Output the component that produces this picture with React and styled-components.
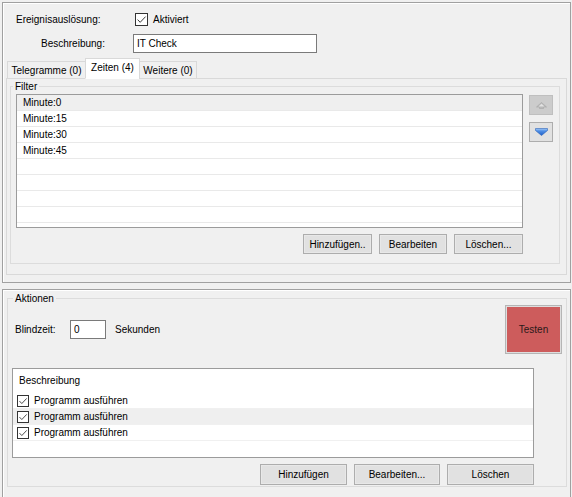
import React from "react"
import styled, { createGlobalStyle } from "styled-components"

const GlobalStyle = createGlobalStyle`
  html, body {
    margin: 0;
    padding: 0;
    background: #f0f0f0;
  }
  body {
    font-family: "Liberation Sans", Arial, sans-serif;
    font-size: 10px;
    color: #000;
  }
  * {
    box-sizing: border-box;
  }
`

const Window = styled.div`
  width: 572px;
  height: 497px;
  overflow: hidden;
  padding: 2px 1px 0 2px;
  display: flex;
  flex-direction: column;
  gap: 6px;
`

const Panel = styled.section`
  flex-shrink: 0;
  height: ${props => props.height}px;
  border: 1px solid #a0a0a0;
  box-shadow: inset 1px 1px 0 #fff;
`

const FormGrid = styled.div`
  display: grid;
  grid-template-columns: 130px 1fr;
  grid-template-rows: 17px 19px;
  row-gap: 6px;
  align-items: center;
  padding-top: 8px;
`

const FieldLabel = styled.span`
  padding-left: ${props => props.indent}px;
`

const CheckField = styled.label`
  display: flex;
  align-items: center;
  gap: 5px;
  margin-left: 2px;
`

const CheckBox = styled.span`
  width: ${props => props.size}px;
  height: ${props => props.size}px;
  flex-shrink: 0;
  border: 1px solid #333;
  background: #fff;
  display: inline-flex;
  align-items: center;
  justify-content: center;
  svg {
    display: block;
  }
`

const Check = ({ size }) => (
  <CheckBox size={size}>
    <svg width={size - 2} height={size - 2} viewBox="0 0 11 11">
      <path d="M1.6 5.6 L4.2 8.3 L9.6 2.6" fill="none" stroke="#3a3a3a" strokeWidth="1" />
    </svg>
  </CheckBox>
)

const TextBox = styled.input`
  width: ${props => props.width}px;
  height: 19px;
  border: 1px solid #7a7a7a;
  background: #fff;
  padding: 0 3px;
  font: inherit;
  color: #000;
  outline: none;
`

const TabStrip = styled.div`
  position: relative;
  z-index: 1;
  display: flex;
  align-items: flex-end;
  margin: 5px 0 -1px 5px;
`

const Tab = styled.div`
  width: ${props => props.width}px;
  height: ${props => (props.active ? 21 : 18)}px;
  margin-left: -1px;
  padding-top: 3px;
  text-align: center;
  line-height: 12px;
  white-space: nowrap;
  background: ${props => (props.active ? "#fff" : "#f0f0f0")};
  border: 1px solid #d9d9d9;
  border-bottom-color: ${props => (props.active ? "#fff" : "#d9d9d9")};
`

const TabPage = styled.div`
  height: 197px;
  margin: 0 3px;
  border: 1px solid #d9d9d9;
  background: #f0f0f0;
  padding-top: 1px;
`

const GroupBox = styled.fieldset`
  width: ${props => props.width}px;
  height: ${props => props.height}px;
  margin: ${props => props.margin};
  padding: 0;
  min-width: 0;
  border: 1px solid #dcdcdc;
`

const Legend = styled.legend`
  margin-left: ${props => props.offset}px;
  padding: 0 2px;
  line-height: 13px;
  height: 13px;
`

const FilterBody = styled.div`
  display: grid;
  grid-template-columns: 507px 24px;
  grid-template-rows: 134px 20px;
  column-gap: 6px;
  row-gap: 6px;
  padding: 1px 0 0 5px;
`

const ListBox = styled.div`
  height: 134px;
  border: 1px solid #9b9b9b;
  background: #fff;
  overflow: hidden;
`

const ListRow = styled.div`
  height: 16px;
  line-height: 15px;
  padding-left: 6px;
  border-bottom: 1px solid #e9e9e9;
  background: ${props => (props.highlight ? "#efefef" : "#fff")};
`

const ArrowColumn = styled.div`
  display: flex;
  flex-direction: column;
  gap: 7px;
  padding-top: 1px;
`

const ArrowButton = styled.div`
  width: 24px;
  height: 20px;
  display: flex;
  align-items: center;
  justify-content: center;
  background: ${props => (props.disabled ? "#cccccc" : "#e1e1e1")};
  border: 1px solid ${props => (props.disabled ? "#bfbfbf" : "#adadad")};
`

const ButtonRow = styled.div`
  grid-column: 1;
  display: flex;
  justify-content: flex-end;
  gap: 7px;
  width: ${props => props.width}px;
  margin: ${props => props.margin || 0};
`

const Button = styled.button`
  width: ${props => props.width}px;
  height: ${props => props.height || 20}px;
  padding: 0;
  font: inherit;
  color: #000;
  background: #e1e1e1;
  border: 1px solid #adadad;
  box-shadow: inset 0 0 0 1px #e8e8e8;
`

const ActionTop = styled.div`
  height: 49px;
  display: flex;
  align-items: center;
  justify-content: space-between;
  padding: 0 4px 0 7px;
`

const Inline = styled.div`
  display: flex;
  align-items: center;
`

const InlineLabel = styled.span`
  width: ${props => props.width || "auto"};
  margin-left: ${props => props.gap || 0}px;
`

const TestButton = styled.div`
  width: 57px;
  height: 49px;
  display: flex;
  align-items: center;
  justify-content: center;
  color: #2a1a1a;
  background: #cd5c5c;
  border: 1px solid #b5b5b5;
  box-shadow: inset 0 0 0 1px #dedede;
`

const ActionList = styled.div`
  width: 522px;
  height: 90px;
  margin: 14px 0 0 4px;
  border: 1px solid #9b9b9b;
  background: #fff;
  overflow: hidden;
`

const ListHeader = styled.div`
  height: 24px;
  line-height: 24px;
  padding-left: 6px;
`

const CheckRow = styled.div`
  height: 16px;
  display: flex;
  align-items: center;
  gap: 5px;
  padding-left: 4px;
  border-bottom: 1px solid #f0f0f0;
  background: ${props => (props.highlight ? "#efefef" : "#fff")};
`

const UpArrow = () => (
  <svg width="11" height="7" viewBox="0 0 11 7">
    <polygon points="5.5,0.5 10.5,5 7.5,5 7.5,6.5 3.5,6.5 3.5,5 0.5,5" fill="#b9b9b9" stroke="#ababab" strokeWidth="0.7" />
    <polygon points="5.5,1.8 8.5,4.4 2.5,4.4" fill="#e2e2e2" />
  </svg>
)

const DownArrow = () => (
  <svg width="13" height="8" viewBox="0 0 13 8">
    <defs>
      <linearGradient id="blue" x1="0" y1="0" x2="0" y2="1">
        <stop offset="0" stopColor="#a9cdf7" />
        <stop offset="0.35" stopColor="#4f8fe6" />
        <stop offset="1" stopColor="#1e5fc8" />
      </linearGradient>
    </defs>
    <polygon points="0.5,0.5 12.5,0.5 12.5,2.5 6.5,7.5 0.5,2.5" fill="url(#blue)" stroke="#2a62b8" strokeWidth="0.6" />
  </svg>
)

const minutes = ["Minute:0", "Minute:15", "Minute:30", "Minute:45", "", "", "", "", ""]
const actions = ["Programm ausführen", "Programm ausführen", "Programm ausführen"]

export default function App() {
  return (
    <>
      <GlobalStyle />
      <Window>
        <Panel height={281}>
          <FormGrid>
            <FieldLabel indent={13}>Ereignisauslösung:</FieldLabel>
            <CheckField>
              <Check size={13} />
              Aktiviert
            </CheckField>
            <FieldLabel indent={38}>Beschreibung:</FieldLabel>
            <TextBox width={184} defaultValue="IT Check" />
          </FormGrid>
          <TabStrip>
            <Tab width={79}>Telegramme (0)</Tab>
            <Tab width={55} active>
              Zeiten (4)
            </Tab>
            <Tab width={58}>Weitere (0)</Tab>
          </TabStrip>
          <TabPage>
            <GroupBox width={550} height={184} margin="0 0 0 3px">
              <Legend offset={2}>Filter</Legend>
              <FilterBody>
                <ListBox>
                  {minutes.map((m, i) => (
                    <ListRow key={i} highlight={i === 0}>
                      {m}
                    </ListRow>
                  ))}
                </ListBox>
                <ArrowColumn>
                  <ArrowButton disabled>
                    <UpArrow />
                  </ArrowButton>
                  <ArrowButton>
                    <DownArrow />
                  </ArrowButton>
                </ArrowColumn>
                <ButtonRow width={507}>
                  <Button width={69}>Hinzufügen..</Button>
                  <Button width={68}>Bearbeiten</Button>
                  <Button width={69}>Löschen...</Button>
                </ButtonRow>
              </FilterBody>
            </GroupBox>
          </TabPage>
        </Panel>
        <Panel height={212}>
          <GroupBox width={560} height={195} margin="2px 0 0 4px">
            <Legend offset={5}>Aktionen</Legend>
            <ActionTop>
              <Inline>
                <InlineLabel width="55px">Blindzeit:</InlineLabel>
                <TextBox width={36} defaultValue="0" />
                <InlineLabel gap={9}>Sekunden</InlineLabel>
              </Inline>
              <TestButton>Testen</TestButton>
            </ActionTop>
            <ActionList>
              <ListHeader>Beschreibung</ListHeader>
              {actions.map((a, i) => (
                <CheckRow key={i} highlight={i === 1}>
                  <Check size={12} />
                  {a}
                </CheckRow>
              ))}
            </ActionList>
            <ButtonRow width={522} margin="6px 0 0 4px">
              <Button width={87} height={21}>Hinzufügen</Button>
              <Button width={86} height={21}>Bearbeiten...</Button>
              <Button width={87} height={21}>Löschen</Button>
            </ButtonRow>
          </GroupBox>
        </Panel>
      </Window>
    </>
  )
}
